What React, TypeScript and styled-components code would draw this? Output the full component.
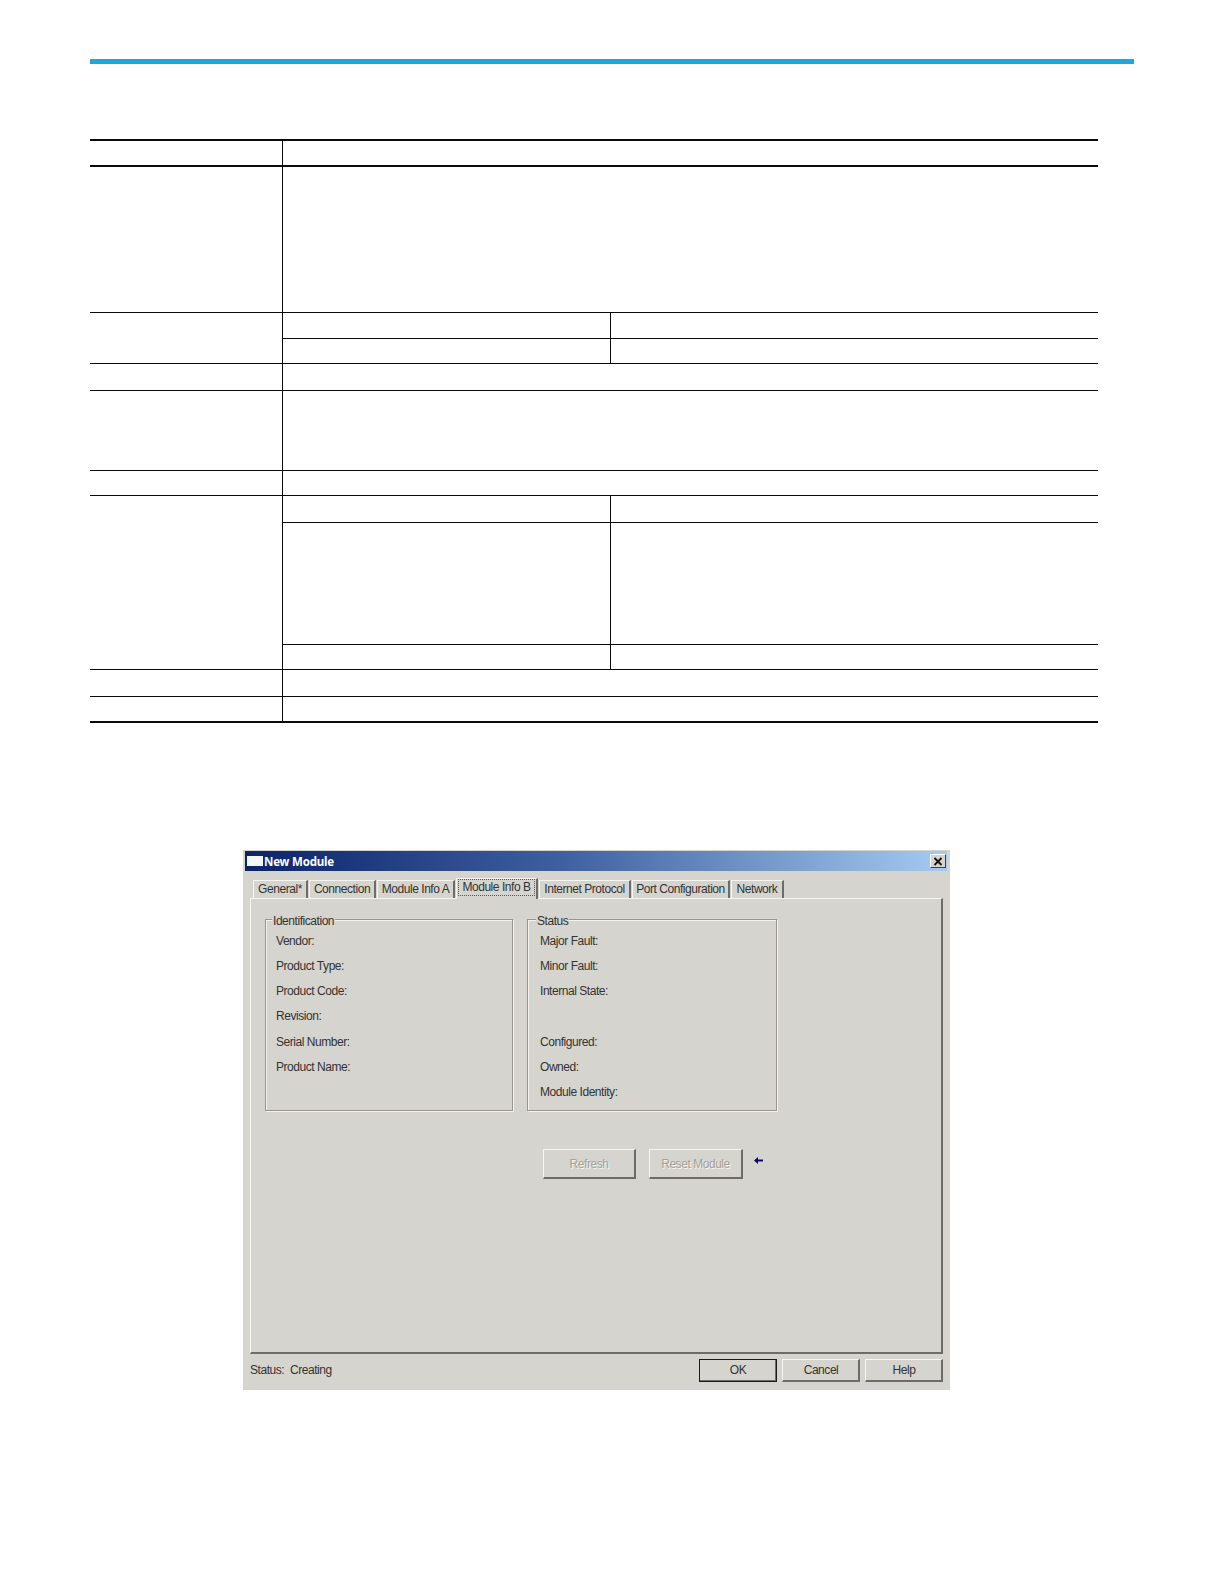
import React from "react";
import styled, { createGlobalStyle } from "styled-components";

const Global = createGlobalStyle`
  html, body { margin: 0; padding: 0; background: #fff; }
  #root { width: 1224px; height: 1584px; overflow: hidden; }
`;

const Page = styled.div`
  box-sizing: border-box;
  width: 1224px;
  height: 1584px;
  padding: 59px 0 0 90px;
  background: #fff;
  font-family: "Liberation Sans", Arial, sans-serif;
`;

const AccentBar = styled.div`
  width: 1044px;
  height: 5px;
  background: #1ba8dc;
`;

const Table = styled.div`
  width: 1008px;
  margin-top: 75px;
  display: flex;
  flex-direction: column;
  border-top: 2px solid #0a0a0a;
  border-bottom: 2px solid #0a0a0a;
`;

const Row = styled.div<{ $h?: number; $thick?: boolean; $first?: boolean }>`
  display: flex;
  box-sizing: border-box;
  ${(p) => (p.$h ? `height: ${p.$h}px;` : "")}
  ${(p) => (p.$first ? "" : `border-top: ${p.$thick ? 2 : 1}px solid #0a0a0a;`)}
`;

const LeftCell = styled.div`
  width: 192px;
  flex: none;
  border-right: 1px solid #0a0a0a;
`;

const RightCell = styled.div`
  flex: 1;
  display: flex;
  flex-direction: column;
`;

const SubRow = styled.div<{ $h: number; $first?: boolean }>`
  display: flex;
  box-sizing: border-box;
  height: ${(p) => p.$h}px;
  ${(p) => (p.$first ? "" : "border-top: 1px solid #0a0a0a;")}
`;

const SubCellA = styled.div`
  width: 327px;
  flex: none;
  border-right: 1px solid #0a0a0a;
`;

const Dialog = styled.div`
  box-sizing: border-box;
  width: 707px;
  height: 540px;
  margin: 127px 0 0 153px;
  padding: 1px 3px 0 2px;
  background: #d6d4ce;
  color: #333;
  font-size: 12px;
  letter-spacing: -0.45px;
`;

const TitleBar = styled.div`
  height: 20px;
  display: flex;
  align-items: center;
  padding: 0 1px 0 2px;
  background: linear-gradient(90deg, #0a246a 0%, #3f5f9f 45%, #a6caf0 100%);
`;

const WindowIcon = styled.div`
  width: 16px;
  height: 10px;
  margin-right: 1px;
  background: #f4f6fb;
`;

const Title = styled.span`
  flex: 1;
  color: #fff;
  font-family: "Noto Sans", "DejaVu Sans", sans-serif;
  font-weight: 700;
  font-size: 11.5px;
  letter-spacing: -0.2px;
`;

const CloseButton = styled.div`
  box-sizing: border-box;
  width: 16px;
  height: 14px;
  display: flex;
  align-items: center;
  justify-content: center;
  background: #d6d4ce;
  border: 1px solid;
  border-color: #fff #404040 #404040 #fff;
`;

const Body = styled.div`
  padding: 0 4px 0 5px;
`;

const TabStrip = styled.div`
  height: 27px;
  display: flex;
  align-items: flex-end;
  padding-left: 3px;
  position: relative;
  z-index: 1;
`;

const Tab = styled.div<{ $w: number; $active?: boolean }>`
  box-sizing: border-box;
  width: ${(p) => p.$w}px;
  height: ${(p) => (p.$active ? 21 : 18)}px;
  margin-right: 1px;
  margin-bottom: ${(p) => (p.$active ? -1 : 0)}px;
  padding-bottom: ${(p) => (p.$active ? 3 : 2)}px;
  display: flex;
  align-items: center;
  justify-content: center;
  border-top: 1px solid #f6f5f1;
  border-left: 1px solid #f6f5f1;
  border-right: 2px solid #6e6c68;
  background: #d6d4ce;
  white-space: nowrap;
`;

const FocusLabel = styled.span`
  padding: 0 3px;
  outline: 1px dotted #555;
  outline-offset: 0;
  line-height: 15px;
`;

const TabPanel = styled.div`
  box-sizing: border-box;
  height: 456px;
  padding: 20px 0 0 14px;
  border-top: 1px solid #f6f5f1;
  border-left: 1px solid #f6f5f1;
  border-right: 2px solid #6e6c68;
  border-bottom: 2px solid #6e6c68;
`;

const Groups = styled.div`
  display: flex;
  gap: 14px;
`;

const Group = styled.div<{ $w: number; $indent: number }>`
  box-sizing: border-box;
  position: relative;
  width: ${(p) => p.$w}px;
  height: 192px;
  padding: 9px 0 0 ${(p) => p.$indent}px;
  border: 1px solid #98958f;
  box-shadow: 1px 1px 0 #f3f2ee, inset 1px 1px 0 #f3f2ee;
`;

const Legend = styled.span<{ $x: number }>`
  position: absolute;
  top: -6px;
  left: ${(p) => p.$x}px;
  padding: 0 1px;
  background: #d6d4ce;
  line-height: 14px;
`;

const FieldRow = styled.div<{ $h: number }>`
  height: ${(p) => p.$h}px;
  display: flex;
  align-items: center;
`;

const ActionRow = styled.div`
  display: flex;
  align-items: flex-start;
  margin: 38px 0 0 278px;
`;

const Button = styled.div<{ $w: number; $h: number; $disabled?: boolean; $default?: boolean }>`
  box-sizing: border-box;
  width: ${(p) => p.$w}px;
  height: ${(p) => p.$h}px;
  display: flex;
  align-items: center;
  justify-content: center;
  background: #d6d4ce;
  border-top: 1px solid #f6f5f1;
  border-left: 1px solid #f6f5f1;
  border-right: 2px solid #6e6c68;
  border-bottom: 2px solid #6e6c68;
  ${(p) => (p.$disabled ? "color: #a3a19c; text-shadow: 1px 1px 0 #f6f5f1;" : "padding-left: 1px;")}
  ${(p) => (p.$default ? "outline: 1px solid #1a1a1a; outline-offset: -1px;" : "")}
`;

const ArrowMark = styled.svg`
  flex: none;
  margin: 8px 0 0 11px;
`;

const ButtonGap = styled.div`
  width: 13px;
  flex: none;
`;

const Footer = styled.div`
  display: flex;
  align-items: center;
  gap: 5px;
  margin-top: 5px;
`;

const StatusText = styled.span`
  flex: 1;
  padding-bottom: 2px;
  white-space: pre;
`;

const tabs = [
  { label: "General*", w: 55 },
  { label: "Connection", w: 67 },
  { label: "Module Info A", w: 78 },
];
const tabsAfter = [
  { label: "Internet Protocol", w: 92 },
  { label: "Port Configuration", w: 98 },
  { label: "Network", w: 53 },
];

const idFields: [string, number][] = [
  ["Vendor:", 24],
  ["Product Type:", 25],
  ["Product Code:", 25],
  ["Revision:", 26],
  ["Serial Number:", 25],
  ["Product Name:", 25],
];
const statusFields: [string, number][] = [
  ["Major Fault:", 24],
  ["Minor Fault:", 25],
  ["Internal State:", 25],
  ["", 26],
  ["Configured:", 25],
  ["Owned:", 25],
  ["Module Identity:", 26],
];

export default function App() {
  return (
    <Page>
      <Global />
      <AccentBar />
      <Table>
        <Row $first $h={24}><LeftCell /><RightCell /></Row>
        <Row $thick $h={147}><LeftCell /><RightCell /></Row>
        <Row $h={51}>
          <LeftCell />
          <RightCell>
            <SubRow $first $h={25}><SubCellA /></SubRow>
            <SubRow $h={25}><SubCellA /></SubRow>
          </RightCell>
        </Row>
        <Row $h={27}><LeftCell /><RightCell /></Row>
        <Row $h={80}><LeftCell /><RightCell /></Row>
        <Row $h={25}><LeftCell /><RightCell /></Row>
        <Row $h={174}>
          <LeftCell />
          <RightCell>
            <SubRow $first $h={26}><SubCellA /></SubRow>
            <SubRow $h={122}><SubCellA /></SubRow>
            <SubRow $h={25}><SubCellA /></SubRow>
          </RightCell>
        </Row>
        <Row $h={27}><LeftCell /><RightCell /></Row>
        <Row $h={25}><LeftCell /><RightCell /></Row>
      </Table>

      <Dialog>
        <TitleBar>
          <WindowIcon />
          <Title>New Module</Title>
          <CloseButton>
            <svg width="10" height="9" viewBox="0 0 10 9">
              <path d="M1.5 1 L8.5 8 M8.5 1 L1.5 8" stroke="#111" strokeWidth="1.8" fill="none" />
            </svg>
          </CloseButton>
        </TitleBar>
        <Body>
          <TabStrip>
            {tabs.map((t) => (
              <Tab key={t.label} $w={t.w}>{t.label}</Tab>
            ))}
            <Tab $w={82} $active><FocusLabel>Module Info B</FocusLabel></Tab>
            {tabsAfter.map((t) => (
              <Tab key={t.label} $w={t.w}>{t.label}</Tab>
            ))}
          </TabStrip>
          <TabPanel>
            <Groups>
              <Group $w={248} $indent={10}>
                <Legend $x={6}>Identification</Legend>
                {idFields.map(([label, h]) => (
                  <FieldRow key={label} $h={h}>{label}</FieldRow>
                ))}
              </Group>
              <Group $w={250} $indent={12}>
                <Legend $x={8}>Status</Legend>
                {statusFields.map(([label, h], i) => (
                  <FieldRow key={i} $h={h}>{label}</FieldRow>
                ))}
              </Group>
            </Groups>
            <ActionRow>
              <Button $w={93} $h={30} $disabled>Refresh</Button>
              <ButtonGap />
              <Button $w={94} $h={30} $disabled>Reset Module</Button>
              <ArrowMark width="9" height="7" viewBox="0 0 9 7">
                <path d="M0 3.5 L4 0 V2.4 H9 V4.6 H4 V7 Z" fill="#0a0a66" />
              </ArrowMark>
            </ActionRow>
          </TabPanel>
          <Footer>
            <StatusText>Status:  Creating</StatusText>
            <Button $w={78} $h={23} $default>OK</Button>
            <Button $w={78} $h={23}>Cancel</Button>
            <Button $w={78} $h={23}>Help</Button>
          </Footer>
        </Body>
      </Dialog>
    </Page>
  );
}
